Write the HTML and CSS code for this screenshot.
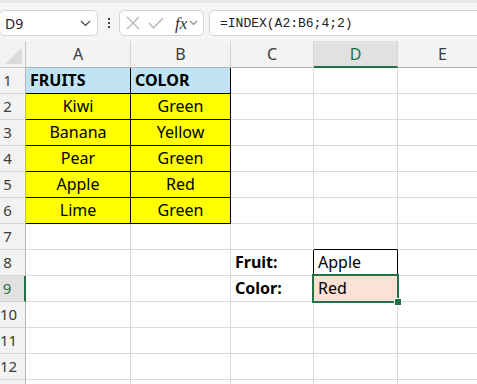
FILE: index.html
```html
<!DOCTYPE html>
<html lang="en">
<head>
    <meta charset="UTF-8">
    <meta name="viewport" content="width=device-width, initial-scale=1.0">
    <title>INDEX</title>
    <link rel="stylesheet" href="styles.css">
</head>
<body>
    <div class="toolbar">
        <div class="namebox">
            <span>D9</span>
            <svg class="chev" width="11" height="7" viewBox="0 0 11 7"><path d="M1 1 L5.5 5.5 L10 1" fill="none" stroke="#444" stroke-width="1.2"/></svg>
        </div>
        <div class="dots"><i></i><i></i><i></i></div>
        <div class="fxbox">
            <svg width="14" height="14" viewBox="0 0 14 14"><path d="M1 1 L13 13 M13 1 L1 13" stroke="#b4b4b4" stroke-width="1.2"/></svg>
            <svg width="16" height="12" viewBox="0 0 16 12"><path d="M1 6 L5.5 11 L15 1" fill="none" stroke="#b4b4b4" stroke-width="1.2"/></svg>
            <span class="fx">fx</span>
            <svg width="9" height="6" viewBox="0 0 9 6"><path d="M1 1 L4.5 4.5 L8 1" fill="none" stroke="#888" stroke-width="1.1"/></svg>
        </div>
        <div class="formula">=INDEX(A2:B6;4;2)</div>
    </div>

    <div class="sheet">
        <div class="corner"></div>
        <div class="colhead">A</div>
        <div class="colhead">B</div>
        <div class="colhead">C</div>
        <div class="colhead sel">D</div>
        <div class="colhead">E</div>

        <div class="rowhead">1</div>
        <div class="cell tb head">FRUITS</div>
        <div class="cell tb head">COLOR</div>
        <div class="cell"></div><div class="cell"></div><div class="cell"></div>

        <div class="rowhead">2</div>
        <div class="cell tb data">Kiwi</div>
        <div class="cell tb data">Green</div>
        <div class="cell"></div><div class="cell"></div><div class="cell"></div>

        <div class="rowhead">3</div>
        <div class="cell tb data">Banana</div>
        <div class="cell tb data">Yellow</div>
        <div class="cell"></div><div class="cell"></div><div class="cell"></div>

        <div class="rowhead">4</div>
        <div class="cell tb data">Pear</div>
        <div class="cell tb data">Green</div>
        <div class="cell"></div><div class="cell"></div><div class="cell"></div>

        <div class="rowhead">5</div>
        <div class="cell tb data">Apple</div>
        <div class="cell tb data">Red</div>
        <div class="cell"></div><div class="cell"></div><div class="cell"></div>

        <div class="rowhead">6</div>
        <div class="cell tb data">Lime</div>
        <div class="cell tb data">Green</div>
        <div class="cell"></div><div class="cell"></div><div class="cell"></div>

        <div class="rowhead">7</div>
        <div class="cell"></div><div class="cell"></div><div class="cell"></div>
        <div class="cell edge-bottom"></div>
        <div class="cell"></div>

        <div class="rowhead">8</div>
        <div class="cell"></div><div class="cell"></div>
        <div class="cell label edge-right">Fruit:</div>
        <div class="cell result boxed">Apple</div>
        <div class="cell"></div>

        <div class="rowhead sel">9</div>
        <div class="cell"></div><div class="cell"></div>
        <div class="cell label">Color:</div>
        <div class="cell result active">Red</div>
        <div class="cell"></div>

        <div class="rowhead">10</div>
        <div class="cell"></div><div class="cell"></div><div class="cell"></div><div class="cell"></div><div class="cell"></div>

        <div class="rowhead">11</div>
        <div class="cell"></div><div class="cell"></div><div class="cell"></div><div class="cell"></div><div class="cell"></div>

        <div class="rowhead">12</div>
        <div class="cell"></div><div class="cell"></div><div class="cell"></div><div class="cell"></div><div class="cell"></div>

        <div class="rowhead"></div>
        <div class="cell"></div><div class="cell"></div><div class="cell"></div><div class="cell"></div><div class="cell"></div>
    </div>
</body>
</html>
```

FILE: styles.css
```css
* {
    margin: 0;
    padding: 0;
    box-sizing: border-box;
}

body {
    background-color: #f3f3f3;
    width: 477px;
    height: 384px;
    overflow: hidden;
    font-family: 'Noto Sans', 'Open Sans', sans-serif;
    color: #000;
}

.toolbar {
    height: 41px;
    border-top: 3px solid #e6e6e6;
    padding-top: 7px;
    display: flex;
    align-items: flex-start;
    background-color: #f5f5f5;
    white-space: nowrap;
}

.namebox,
.fxbox,
.formula {
    height: 26px;
    background-color: white;
    border: 1px solid #d4d4d4;
    border-radius: 5px;
    display: flex;
    align-items: center;
}

.namebox {
    width: 99px;
    margin-left: -1px;
    padding-left: 5px;
    padding-right: 6px;
    justify-content: space-between;
    font-size: 14px;
    color: #222;
}

.dots {
    width: 21px;
    height: 26px;
    display: flex;
    flex-direction: column;
    align-items: center;
    justify-content: center;
    gap: 2px;
}

.dots i {
    width: 2px;
    height: 2px;
    background-color: #444;
}

.fxbox {
    width: 85px;
    padding-left: 6px;
    gap: 8px;
}

.fxbox .fx {
    font-family: 'Liberation Serif', 'DejaVu Serif', serif;
    font-style: italic;
    font-size: 17px;
    color: #333;
    margin-left: 3px;
    margin-right: -6px;
    line-height: 1;
}

.formula {
    margin-left: 5px;
    flex: 1;
    margin-right: -10px;
    padding-left: 10px;
    font-family: 'Liberation Mono', 'DejaVu Sans Mono', monospace;
    font-size: 13px;
    color: #222;
}

.sheet {
    display: grid;
    grid-template-columns: 26px 105px 100px 83px 84px 90px;
    grid-template-rows: 27px repeat(13, 26px);
    background-color: white;
}

.corner,
.colhead,
.rowhead {
    background-color: #f3f3f3;
    color: #3b3b3b;
    font-size: 16px;
}

.corner {
    border-right: 1px solid #c6c6c6;
    border-bottom: 1px solid #c6c6c6;
    position: relative;
}

.corner::after {
    content: '';
    position: absolute;
    right: 3px;
    bottom: 3px;
    border-left: 17px solid transparent;
    border-bottom: 17px solid #dbdbdb;
}

.colhead {
    text-align: center;
    line-height: 24px;
    padding-top: 1px;
    border-right: 1px solid #d4d4d4;
    border-bottom: 1px solid #b4b4b4;
}

.colhead.sel {
    background-color: #e1e1e1;
    color: #217346;
    border-bottom: 2px solid #217346;
}

.rowhead {
    font-size: 15px;
    line-height: 25px;
    text-align: center;
    padding-right: 10px;
    border-right: 1px solid #b4b4b4;
    border-bottom: 1px solid #d4d4d4;
}

.rowhead.sel {
    background-color: #e1e1e1;
    color: #217346;
    border-right: 2px solid #217346;
}

.cell {
    border-right: 1px solid #dadada;
    border-bottom: 1px solid #dadada;
    font-size: 16px;
    line-height: 25px;
    padding: 0 4px;
    white-space: nowrap;
}

.cell.tb {
    border-right-color: #000;
    border-bottom-color: #000;
    background-color: #ffff00;
}

.cell.head {
    background-color: #c1e4f5;
    font-weight: bold;
}

.cell.data {
    text-align: center;
}

.cell.label {
    font-weight: bold;
}

.edge-right {
    border-right-color: #000;
}

.edge-bottom {
    border-bottom-color: #000;
}

.cell.boxed {
    border-right-color: #000;
    border-bottom-color: #000;
}

.cell.active {
    background-color: #fbe2d5;
    position: relative;
}

.cell.active::before {
    content: '';
    position: absolute;
    left: -2px;
    top: -2px;
    right: -2px;
    bottom: -2px;
    border: 2px solid #217346;
}

.cell.active::after {
    content: '';
    position: absolute;
    right: -5px;
    bottom: -5px;
    width: 6px;
    height: 6px;
    background-color: #217346;
    border: 1px solid white;
}
```
